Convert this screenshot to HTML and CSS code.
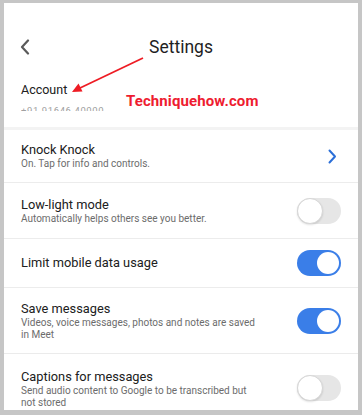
FILE: index.html
```html
<!DOCTYPE html>
<html lang="en">
<head>
<meta charset="utf-8">
<title>Settings</title>
<link rel="stylesheet" href="styles.css">
</head>
<body>
<div class="panel">
  <header class="header">
    <svg class="back" width="12" height="16" viewBox="0 0 12 16"><path d="M9 1.5 L3 8 L9 14.5" fill="none" stroke="#5a5a5a" stroke-width="2.2" stroke-linecap="round" stroke-linejoin="round"/></svg>
    <h1 class="title">Settings</h1>
  </header>

  <section class="account">
    <div class="row-title">Account</div>
    <div class="phone-clip"><span class="phone">+91 91646 40000</span></div>
  </section>
  <div class="sep sep-band"></div>

  <div class="row row-knock">
    <div class="text">
      <div class="row-title">Knock Knock</div>
      <div class="row-sub">On. Tap for info and controls.</div>
    </div>
    <svg class="chev" width="10" height="15" viewBox="0 0 10 15"><path d="M2.5 1.5 L8 7.5 L2.5 13.5" fill="none" stroke="#2b6fd8" stroke-width="2" stroke-linecap="round" stroke-linejoin="round"/></svg>
  </div>
  <div class="sep"></div>

  <div class="row row-low">
    <div class="text">
      <div class="row-title">Low-light mode</div>
      <div class="row-sub">Automatically helps others see you better.</div>
    </div>
    <div class="toggle"><span class="knob"></span></div>
  </div>
  <div class="sep"></div>

  <div class="row row-limit">
    <div class="text">
      <div class="row-title">Limit mobile data usage</div>
    </div>
    <div class="toggle on"><span class="knob"></span></div>
  </div>
  <div class="sep"></div>

  <div class="row row-save">
    <div class="text">
      <div class="row-title">Save messages</div>
      <div class="row-sub">Videos, voice messages, photos and notes are saved in Meet</div>
    </div>
    <div class="toggle on"><span class="knob"></span></div>
  </div>
  <div class="sep sep-thick"></div>

  <div class="row row-captions">
    <div class="text">
      <div class="row-title">Captions for messages</div>
      <div class="row-sub">Send audio content to Google to be transcribed but not stored</div>
    </div>
    <div class="toggle"><span class="knob"></span></div>
  </div>

  <svg class="arrow" width="354" height="120" viewBox="0 0 354 120">
    <line x1="139" y1="55" x2="76" y2="85" stroke="#ee1c24" stroke-width="1.8"/>
    <path d="M68 89 L74.5 80.5 L78.5 88.5 Z" fill="#ee1c24"/>
  </svg>
  <div class="watermark">Techniquehow.com</div>
</div>
</body>
</html>
```

FILE: styles.css
```css
* { box-sizing: border-box; }
html, body { margin: 0; padding: 0; }
body {
  width: 362px;
  height: 415px;
  background: #c6c6c6;
  font-family: Roboto, "Liberation Sans", sans-serif;
  overflow: hidden;
  padding: 3px 4px 0 4px;
}
.panel {
  position: relative;
  height: 407px;
  background: #fff;
  overflow: hidden;
}
.header {
  position: relative;
  height: 64px;
  padding-top: 32px;
  display: flex;
  justify-content: center;
}
.back {
  position: absolute;
  left: 15px;
  top: 36px;
}
.title {
  margin: 0;
  height: 24px;
  line-height: 24px;
  font-size: 17.5px;
  font-weight: 400;
  color: #1f1f1f;
}
.account {
  height: 60px;
  padding: 15px 0 0 17px;
}
.row-title {
  font-size: 12.8px;
  line-height: 16px;
  color: #202020;
}
.account .row-title { font-size: 12.5px; }
.phone-clip {
  margin-top: 9px;
  height: 4px;
  overflow: hidden;
}
.phone {
  display: block;
  margin-top: -2px;
  font-size: 9.5px;
  line-height: 11px;
  color: #a0a0a0;
  letter-spacing: 0.6px;
}
.sep { height: 1px; background: #ececec; }
.sep-band { height: 3px; background: #f3f3f3; }
.sep-thick { height: 1px; background: #ebebeb; }
.row {
  display: flex;
  align-items: center;
  justify-content: space-between;
  padding: 0 17px 0 17px;
}
.row-knock { height: 52px; }
.row-low { height: 55px; }
.row-limit { height: 48px; }
.row-save { height: 65px; }
.row-captions { height: 56px; align-items: flex-start; padding-top: 15px; }
.text { max-width: 236px; }
.row-sub {
  font-size: 10px;
  line-height: 12px;
  color: #6c6c6c;
}
.chev { margin-right: 4px; }
.toggle {
  position: relative;
  width: 44px;
  height: 26px;
  border-radius: 13px;
  background: #e6e6e6;
  flex: none;
}
.row-captions .toggle { margin-top: 6px; }
.toggle .knob {
  position: absolute;
  left: 0;
  top: 0;
  width: 26px;
  height: 26px;
  border-radius: 50%;
  background: #fff;
  border: 1px solid #d6d6d6;
  box-shadow: 0 1px 2px rgba(0,0,0,0.12);
}
.toggle.on { background: #3a7ee8; }
.toggle.on .knob {
  left: auto;
  right: 2px;
  top: 2px;
  width: 22px;
  height: 22px;
  border: none;
  box-shadow: none;
}
.arrow {
  position: absolute;
  left: 0;
  top: 0;
}
.watermark {
  position: absolute;
  left: 122px;
  top: 90px;
  font-size: 15px;
  line-height: 17px;
  font-weight: 700;
  color: #ee1c30;
  letter-spacing: 0.1px;
}
```
